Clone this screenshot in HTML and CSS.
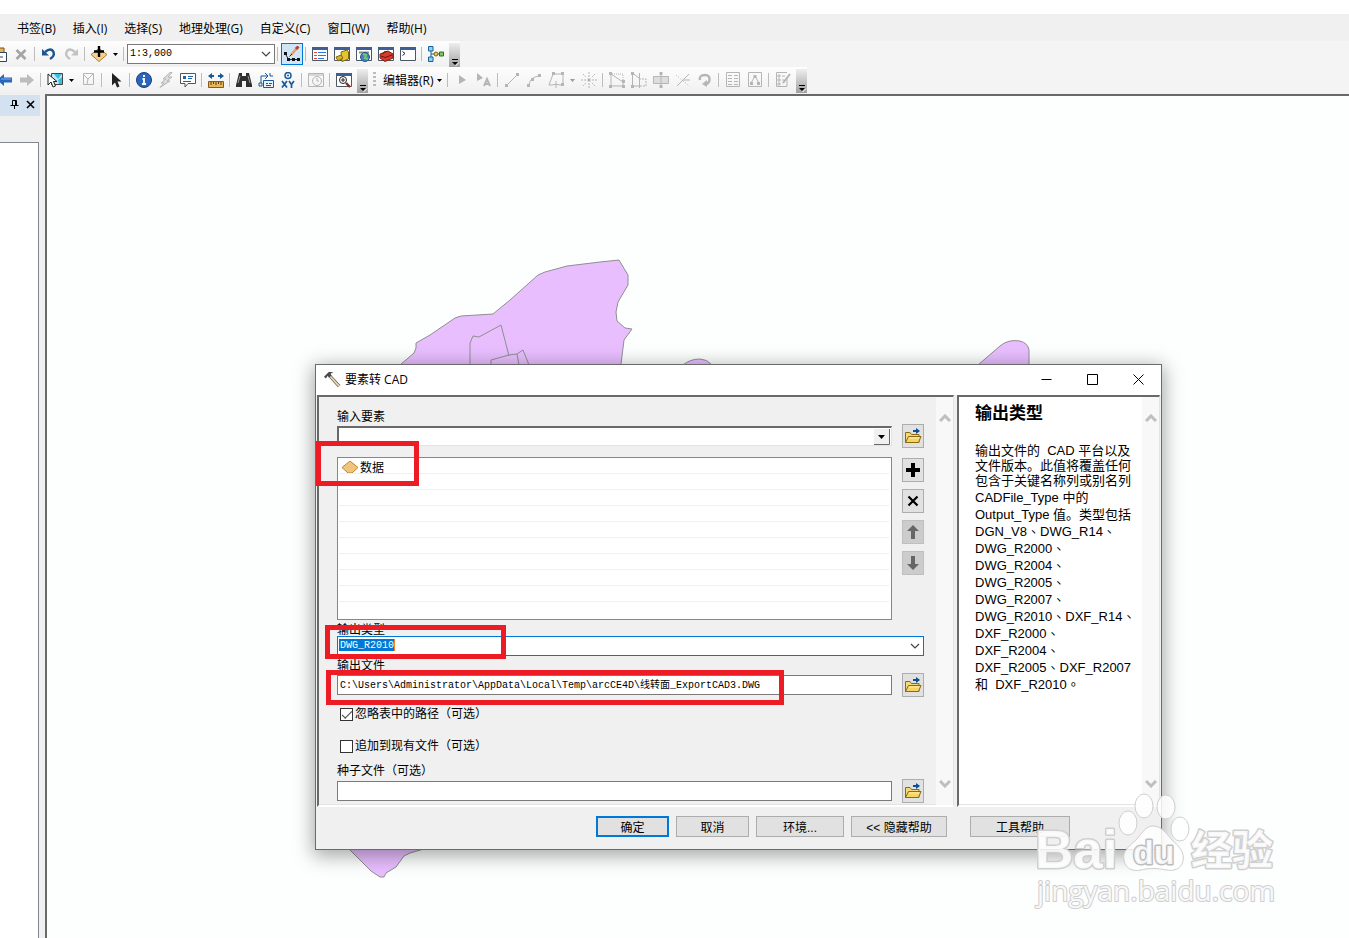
FILE: index.html
```html
<!DOCTYPE html>
<html lang="zh-CN">
    <head>
        <meta charset="UTF-8">
        <meta name="viewport" content="width=device-width, initial-scale=1.0">
        <title>要素转 CAD</title>

        <link rel="stylesheet" href="styles.css">
    </head>
    <body>

        <!-- shared icons -->
        <svg class="symbols">
            <symbol id="caret" viewBox="0 0 5 3"><path d="M0 0H5L2.5 3Z"/></symbol>
            <symbol id="folder" viewBox="0 0 18 18">
                <path d="M1.500 15.500V5.500H6L7.500 7.500H15V15.500Z" fill="#f3d77c" stroke="#8b6a14"/>
                <path d="M1.500 15.500L4.500 9.500H17L14.500 15.500Z" fill="#f5d365" stroke="#8b6a14"/>
                <path d="M5 11H15" stroke="#fff2b5"/>
                <path d="M9 4H14" stroke="#0a4f93" stroke-width="2"/><path d="M12 1L16 4L12 7Z" fill="#0a4f93"/>
            </symbol>
            <symbol id="more" viewBox="0 0 11 24">
                <path d="M3 16.500H9" stroke="#000"/><path d="M3 19H9L6 22Z" fill="#000"/>
                <path d="M6.500 23L10 19.500" stroke="#fff"/>
            </symbol>
            <symbol id="up" viewBox="0 0 12 8"><path d="M1 7L6 2L11 7" fill="none" stroke="#bfbfbf" stroke-width="3"/></symbol>
            <symbol id="down" viewBox="0 0 12 8"><path d="M1 1L6 6L11 1" fill="none" stroke="#bfbfbf" stroke-width="3"/></symbol>
            <symbol id="chevron" viewBox="0 0 10 6"><path d="M1 1L5 5L9 1" fill="none" stroke="#444" stroke-width="1.200"/></symbol>
            <symbol id="window" viewBox="0 0 16 16">
                <path d="M.500 1.500H15.500V14.500H.500Z" fill="#fff" stroke="#4d5663"/><path d="M0 1H16V4H0Z" fill="#3e5f95"/>
            </symbol>
        </svg>

        <nav class="menu">
            <button>书签(B)</button>
            <button>插入(I)</button>
            <button>选择(S)</button>
            <button>地理处理(G)</button>
            <button>自定义(C)</button>
            <button>窗口(W)</button>
            <button>帮助(H)</button>
        </nav>

        <div class="toolbar">
            <div class="strip strip-standard">
                <button class="tool" aria-label="粘贴"><svg viewBox="0 0 16 16"><path d="M3 2H13V9H3Z" fill="#e6b35a" stroke="#7a5518"/><path d="M8.500 6.500H15.500V15.500H8.500Z" fill="#fff" stroke="#345"/><path d="M5 11H12" stroke="#345"/></svg></button>
                <button class="tool" aria-label="删除"><svg viewBox="0 0 16 16"><path d="M3.500 4L12.500 13M12.500 4L3.500 13" stroke="#a5a5a5" stroke-width="2.600"/></svg></button>
                <i class="sep"></i>
                <button class="tool" aria-label="撤消"><svg viewBox="0 0 16 16"><path d="M4 6Q10 1 12.500 6Q14 10 9 13" fill="none" stroke="#1b5593" stroke-width="2.400"/><path d="M1 3V9.500H8Z" fill="#1b5593"/></svg></button>
                <button class="tool" aria-label="恢复"><svg viewBox="0 0 16 16"><path d="M12 6Q6 1 3.500 6Q2 10 7 13" fill="none" stroke="#c2c2c2" stroke-width="2.400"/><path d="M15 3V9.500H8Z" fill="#c2c2c2"/></svg></button>
                <i class="sep"></i>
                <button class="tool" aria-label="添加数据"><svg viewBox="0 0 16 16"><path d="M0 8.500L8 2.500L16 8.500L8 15.500Z" fill="#f6d08c" stroke="#a97b34"/><path d="M8 0V11M3 5.500H13" stroke="#000" stroke-width="2.400"/></svg></button>
                <button class="drop" aria-label="更多"><svg><use href="#caret"/></svg></button>
                <i class="sep"></i>
                <div class="combo scale">
                    <select aria-label="比例尺"><option>1:3,000</option></select>
                    <svg class="arrow"><use href="#chevron"/></svg>
                </div>
                <i class="sep"></i>
                <button class="tool pressed" aria-label="编辑器工具条"><svg viewBox="0 0 16 16"><path d="M1.500 8L4.500 13.500H15" fill="none" stroke="#222"/><path d="M0 6H3V9H0ZM3 12H6V15H3ZM8 12H11V15H8ZM13 12H16V15H13Z" fill="#111"/><path d="M7 9L13 2" stroke="#e0a45c" stroke-width="2.600"/><path d="M12 3L14.500 0.500" stroke="#c33b32" stroke-width="3"/><path d="M5.500 10.500L8 8" stroke="#333"/></svg></button>
                <i class="sep"></i>
                <button class="tool" aria-label="内容列表"><svg viewBox="0 0 16 16"><use href="#window"/><path d="M2 6.500H5M2 9.500H5M2 12.500H5" stroke="#e8483c"/><path d="M6 6.500H14M6 9.500H14M6 12.500H12" stroke="#2d78d8"/></svg></button>
                <button class="tool" aria-label="目录"><svg viewBox="0 0 16 16"><use href="#window"/><path d="M7 6L13 4L14.500 6V13L8 15.500Z" fill="#e5c52e" stroke="#7e6710"/><path d="M2 11L7 9L9 12L4 15Z" fill="#d4b527" stroke="#7e6710"/></svg></button>
                <button class="tool" aria-label="搜索"><svg viewBox="0 0 16 16"><use href="#window"/><path d="M3 6.500H13" stroke="#888" stroke-width="2"/><circle cx="9" cy="11" r="4.500" fill="#3c83c9" stroke="#27568a"/><path d="M7 8L10 9L9 12L12 13" stroke="#7cc46c" stroke-width="2" fill="none"/></svg></button>
                <button class="tool" aria-label="工具箱"><svg viewBox="0 0 16 16"><use href="#window"/><path d="M2 8L10 5L15 8V12L7 15.500L2 12Z" fill="#d63b2b" stroke="#7d1c14"/><path d="M5 8Q5 5 9 5.500M3 10L7 11.500L14 9" fill="none" stroke="#6b1510"/></svg></button>
                <button class="tool" aria-label="Python"><svg viewBox="0 0 16 16"><use href="#window"/><path d="M2.500 5.500L5 7.500L2.500 9.500" fill="none" stroke="#222"/></svg></button>
                <i class="sep"></i>
                <button class="tool" aria-label="模型构建器"><svg viewBox="0 0 16 16"><path d="M3 3V13M3 8H16" stroke="#14649c"/><path d="M.500 .500H5V5H.500ZM.500 11H5V15.500H.500Z" fill="#8fd0f0" stroke="#14649c"/><circle cx="8" cy="8" r="2" fill="#f1c64c" stroke="#7d6517"/><path d="M11.500 6H15.500V10H11.500Z" fill="#7fc65d" stroke="#326e22"/></svg></button>
                <button class="overflow" aria-label="工具条选项"><svg><use href="#more"/></svg></button>
            </div>
        </div>

        <div class="toolbar">
            <div class="strip strip-tools">
                <button class="tool" aria-label="后退"><svg viewBox="0 0 16 16"><path d="M0 8L7 2V5.500H15V10.500H7V14Z" fill="#2767bd"/><path d="M4 7H14" stroke="#7fb1ec"/></svg></button>
                <button class="tool" aria-label="前进"><svg viewBox="0 0 16 16"><path d="M15 8L8 2V5.500H1V10.500H8V14Z" fill="#bdbdbd"/></svg></button>
                <i class="sep"></i>
                <button class="tool" aria-label="选择要素"><svg viewBox="0 0 16 16"><path d="M4.500 1.500H15.500V12.500H4.500Z" fill="#c7e8f2" stroke="#444"/><path d="M7 2H15L11 7ZM11 8L15 5V12H12Z" fill="#35bfe0"/><path d="M1 2V13L4 10L6 15L8.500 14L6.500 9.500H10Z" fill="#fff" stroke="#222"/></svg></button>
                <button class="drop" aria-label="更多"><svg><use href="#caret"/></svg></button>
                <button class="tool muted" aria-label="清除所选要素"><svg viewBox="0 0 16 16"><path d="M3.500 1.500H13.500V12.500H3.500ZM4 3L8 7L13 2M8 7L7 12" /></svg></button>
                <i class="sep"></i>
                <button class="tool" aria-label="选择元素"><svg viewBox="0 0 16 16"><path d="M4 1V13.500L7 10.500L9 15.500L11.500 14.500L9.500 9.500H13.500Z" fill="#222"/></svg></button>
                <i class="sep"></i>
                <button class="tool" aria-label="识别"><svg viewBox="0 0 16 16"><circle cx="8" cy="8" r="7.500" fill="#2a66bd" stroke="#173f80"/><path d="M8 3V5M6.500 7H8V12M6 12H10" fill="none" stroke="#fff" stroke-width="1.800"/></svg></button>
                <button class="tool muted" aria-label="超链接"><svg viewBox="0 0 16 16"><path d="M12 .500L5 7H8L3 11H6L2 15.500L12 9H9L14 5H10L14 .500Z" fill="#ddd"/></svg></button>
                <button class="tool" aria-label="HTML 弹出窗口"><svg viewBox="0 0 16 16"><path d="M.500 1.500H15.500V11.500H8L5 15V11.500H.500Z" fill="#fff" stroke="#555"/><path d="M3 4H6V7H3Z" fill="#1b65b0"/><path d="M8 4.500H13M8 6.500H12M3 9.500H11" stroke="#1b65b0"/></svg></button>
                <i class="sep"></i>
                <button class="tool" aria-label="测量"><svg viewBox="0 0 16 16"><path d="M1 4H6M10 4H15" stroke="#17599a" stroke-width="2"/><path d="M0 4L4 1V7ZM16 4L12 1V7Z" fill="#17599a"/><path d="M.500 9.500H15.500V15.500H.500Z" fill="#e9b75a" stroke="#8a5718"/><path d="M3 10V13M5.500 10V12M8 10V13M10.500 10V12M13 10V13" stroke="#5b3909"/></svg></button>
                <i class="sep"></i>
                <button class="tool" aria-label="查找"><svg viewBox="0 0 16 16"><path d="M3 1H6V4H10V1H13L16 13V15H10V9H6V15H0V13Z" fill="#303030"/><path d="M2 11L4 4M12 4L14 11" stroke="#999"/></svg></button>
                <button class="tool" aria-label="查找路径"><svg viewBox="0 0 16 16"><path d="M3 11V4H9M7 1L10 4L7 7" fill="none" stroke="#17599a"/><path d="M5.500 8.500H15.500V15.500H5.500Z" fill="#e8f2f8" stroke="#17599a"/><path d="M12 1V4H15M8 11.500H10M11 11.500H14M8 13.500H13M1 11H4V14H1Z" fill="none" stroke="#17599a"/></svg></button>
                <button class="tool" aria-label="转到 XY"><svg viewBox="0 0 16 16"><circle cx="8" cy="3.500" r="3" fill="#fff" stroke="#17599a" stroke-width="1.500"/><circle cx="8" cy="3.500" r="1" fill="#17599a"/><path d="M2 9L7 15.500M7 9L2 15.500M9 9L11.500 12.500L14 9M11.500 12V16" fill="none" stroke="#17599a" stroke-width="1.700"/></svg></button>
                <i class="sep"></i>
                <button class="tool muted" aria-label="时间滑块"><svg viewBox="0 0 16 16"><path d="M.500 1.500H15.500V14.500H.500ZM1 3H15"/><circle cx="9" cy="9" r="4.500"/><path d="M9 6V9H11"/></svg></button>
                <i class="sep"></i>
                <button class="tool" aria-label="创建查看器窗口"><svg viewBox="0 0 16 16"><use href="#window"/><circle cx="7" cy="8" r="3.500" fill="#fff" stroke="#222"/><path d="M5 8H9M7 6V10" stroke="#222"/><path d="M10 11L14 15" stroke="#7d2b20" stroke-width="2.400"/></svg></button>
                <button class="overflow" aria-label="工具条选项"><svg><use href="#more"/></svg></button>
            </div>
            <div class="strip">
                <i class="grip"></i>
                <button class="editor">编辑器(R)</button>
                <button class="drop" aria-label="编辑器菜单"><svg><use href="#caret"/></svg></button>
                <i class="sep"></i>
                <button class="tool muted" aria-label="编辑工具"><svg viewBox="0 0 16 16"><path d="M5 3V12L12 8Z" fill="#b5b5b5" stroke="none"/></svg></button>
                <button class="tool muted" aria-label="编辑注记工具"><svg viewBox="0 0 16 16"><path d="M1 1V9L7 6Z" fill="#b5b5b5" stroke="none"/><path d="M8 14L11 7L14 14M9 12H13" stroke-width="2"/></svg></button>
                <i class="sep"></i>
                <button class="tool muted" aria-label="直线段"><svg viewBox="0 0 16 16"><path d="M3 13L13 3"/><path d="M1 12H4V15H1ZM12 1H15V4H12Z" fill="#b5b5b5" stroke="none"/></svg></button>
                <button class="tool muted" aria-label="弧段"><svg viewBox="0 0 16 16"><path d="M3 13Q4 5 13 4"/><path d="M1 12H4V15H1ZM12 2H15V5H12ZM5 6H8V9H5Z" fill="#b5b5b5" stroke="none"/></svg></button>
                <button class="tool muted" aria-label="追踪"><svg viewBox="0 0 16 16"><path d="M5 2H15V13H11M5 2L1 13H5M8 9V16M5 12.500H11"/><path d="M4 0H7V3H4ZM13 0H16V3H13ZM13 11H16V14H13Z" fill="#b5b5b5" stroke="none"/></svg></button>
                <button class="drop muted" aria-label="更多"><svg><use href="#caret"/></svg></button>
                <button class="tool muted" aria-label="点"><svg viewBox="0 0 16 16"><path d="M8 0V5M8 11V16M0 8H5M11 8H16M2 2L5 5M11 11L14 14M14 2L11 5M5 11L2 14" stroke-dasharray="2 1"/><path d="M6.500 6.500H9.500V9.500H6.500Z" fill="#b5b5b5" stroke="none"/></svg></button>
                <i class="sep"></i>
                <button class="tool muted" aria-label="编辑折点"><svg viewBox="0 0 16 16"><path d="M2 2V14H14V10L2 2"/><path d="M3 2H14V10" stroke-dasharray="1 1"/><path d="M0 0H3V3H0ZM0 13H3V16H0ZM13 13H16V16H13ZM13 8H16V11H13Z" fill="#b5b5b5" stroke="none"/></svg></button>
                <button class="tool muted" aria-label="整形要素"><svg viewBox="0 0 16 16"><path d="M1.500 1V14H8M1.500 1L8 6M8.500 1V16"/><path d="M8 7H15V14H8" stroke-dasharray="2 1"/><path d="M0 0H3V3H0ZM0 13H3V16H0Z" fill="#b5b5b5" stroke="none"/></svg></button>
                <button class="tool muted" aria-label="裁剪面"><svg viewBox="0 0 16 16"><path d="M.500 4.500H15.500V11.500H.500Z" fill="#ddd"/><path d="M8 1V15"/><path d="M6.500 0H9.500V3H6.500ZM6.500 13H9.500V16H6.500Z" fill="#b5b5b5" stroke="none"/></svg></button>
                <button class="tool muted" aria-label="分割"><svg viewBox="0 0 16 16"><path d="M2 14L14 2M8 8H15"/><path d="M1 3L14 14" stroke-dasharray="1 2"/></svg></button>
                <button class="tool muted" aria-label="旋转"><svg viewBox="0 0 16 16"><path d="M3 8Q2 3 8 3Q13 3 12.500 8Q12 12 8 12" stroke-width="2.400"/><path d="M10 8V15L5 12Z" fill="#b5b5b5" stroke="none"/></svg></button>
                <i class="sep"></i>
                <button class="tool muted" aria-label="属性"><svg viewBox="0 0 16 16"><path d="M1.500 .500H14.500V14.500H1.500ZM3 3.500H7M3 6.500H7M3 9.500H7M3 12.500H7M9 3.500H13M9 6.500H13M9 9.500H13M9 12.500H13"/></svg></button>
                <button class="tool muted" aria-label="草图属性"><svg viewBox="0 0 16 16"><path d="M1.500 .500H14.500V14.500H1.500ZM4 11L8 4L12 11"/><path d="M3 10H6V13H3ZM6.500 3H9.500V6H6.500ZM10 10H13V13H10Z" fill="#b5b5b5" stroke="none"/></svg></button>
                <i class="sep"></i>
                <button class="tool muted" aria-label="创建要素"><svg viewBox="0 0 16 16"><path d="M12 5V14.500H1.500V.500H12M3 3H5V5H3ZM3 7H5V9H3ZM3 11H5V13H3ZM7 4H10M7 8H9"/><path d="M8 11L15 2" stroke-width="2"/></svg></button>
                <button class="overflow" aria-label="工具条选项"><svg><use href="#more"/></svg></button>
            </div>
        </div>

        <div class="workspace">
            <aside class="contents">
                <div class="contents-title">
                    <button aria-label="固定"><svg viewBox="0 0 9 9"><path d="M2.500 5V.500H6.500V5M5.500 .500V5M.500 5.500H8.500M4.500 6V9" fill="none" stroke="#000"/></svg></button>
                    <button aria-label="关闭"><svg viewBox="0 0 9 9"><path d="M1 1L8 8M8 1L1 8" stroke="#000" stroke-width="1.600"/></svg></button>
                </div>
                <div class="contents-tree"></div>
            </aside>

            <main class="map">
                <svg class="features" viewBox="47 96 1302 842" preserveAspectRatio="xMinYMin slice">
                    <path d="M400 365L414 353L416 348V343L430 335L455 318L461 316L493 314L510 300L538 275L545 272L567 266L600 262L619 260L628 275V285L618 302L616 312L617 321L625 328L632 329L624 340L621 364L622 480H400Z"/>
                    <path class="line" d="M470 365V343L473 336L479 337L501 325L509 356M491 365V360L509 355L517 354L523 350L529 365M517 354L519 365"/>
                    <path d="M683 365Q690 359 700 359Q707 359 712 365Z"/>
                    <path d="M978 365L1000 346Q1008 339 1020 341Q1028 343 1029 350V365Z"/>
                    <path d="M348 848L371 871L380 877H384L386 873L396 867L404 856L410 853L427 848Z"/>
                </svg>
            </main>
        </div>

        <!-- geoprocessing tool window -->
        <section class="dialog">
            <header class="titlebar">
                <svg class="hammer" viewBox="0 0 18 18"><path d="M6 5L16 16" stroke="#73604c" stroke-width="3.400"/><path d="M6 5L16 16" stroke="#e5d8c0" stroke-width="1.800"/><path d="M0 6L5 1L10 1L7 3L8 5L5 7L4 5L2 8Z" fill="#4a4a4a"/></svg>
                <h2>要素转 CAD</h2>
                <button aria-label="最小化"><svg viewBox="0 0 11 11"><path d="M.500 5.500H10.500"/></svg></button>
                <button aria-label="最大化"><svg viewBox="0 0 11 11"><path d="M.500 .500H10.500V10.500H.500Z"/></svg></button>
                <button aria-label="关闭窗口"><svg viewBox="0 0 11 11"><path d="M.500 .500L10.500 10.500M10.500 .500L.500 10.500"/></svg></button>
            </header>

            <div class="panels">
                <div class="panel form-panel">
                    <form class="form" id="export">
                        <label class="first" for="features">输入要素</label>
                        <div class="row">
                            <div class="combo sunken">
                                <select id="features"><option></option></select>
                                <svg class="arrow classic" viewBox="0 0 16 16"><path d="M0 0H16V16H0Z" fill="#f0f0f0"/><path d="M0 15.500H15.500V0" fill="none" stroke="#696969"/><path d="M4 6H11L7.500 10Z"/></svg>
                            </div>
                            <button type="button" class="side" aria-label="浏览输入要素"><svg><use href="#folder"/></svg></button>
                        </div>

                        <div class="row list-row">
                            <ul class="list">
                                <li><svg viewBox="0 0 16 12"><path d="M0 6.500L8 0L16 6.500L10 12H6Z" fill="#f0c47c" stroke="#b98532"/></svg>数据</li>
                                <li></li><li></li><li></li><li></li><li></li><li></li><li></li><li></li><li></li>
                            </ul>
                            <div class="side-buttons">
                                <button type="button" class="side" aria-label="添加"><svg viewBox="0 0 18 18"><path d="M9 2V16M2 9H16" stroke="#000" stroke-width="4"/></svg></button>
                                <button type="button" class="side" aria-label="移除"><svg viewBox="0 0 18 18"><path d="M4.500 4.500L13.500 13.500M13.500 4.500L4.500 13.500" stroke="#000" stroke-width="2.200"/></svg></button>
                                <button type="button" class="side" aria-label="上移" disabled><svg viewBox="0 0 18 18"><path d="M9 2L15 8H11V16H7V8H3Z" fill="#666"/></svg></button>
                                <button type="button" class="side" aria-label="下移" disabled><svg viewBox="0 0 18 18"><path d="M9 16L15 10H11V2H7V10H3Z" fill="#666"/></svg></button>
                            </div>
                        </div>

                        <label class="tight" for="type">输出类型</label>
                        <div class="combo focused">
                            <select id="type"><option>DWG_R2010</option></select>
                            <svg class="arrow"><use href="#chevron"/></svg>
                        </div>

                        <label for="output">输出文件</label>
                        <div class="row">
                            <input type="text" id="output" value="C:\Users\Administrator\AppData\Local\Temp\arcCE4D\线转面_ExportCAD3.DWG">
                            <button type="button" class="side" aria-label="浏览输出文件"><svg><use href="#folder"/></svg></button>
                        </div>

                        <label class="check"><input type="checkbox" checked>忽略表中的路径（可选）</label>
                        <label class="check"><input type="checkbox">追加到现有文件（可选）</label>

                        <label class="last" for="seed">种子文件（可选）</label>
                        <div class="row">
                            <input type="text" id="seed">
                            <button type="button" class="side" aria-label="浏览种子文件"><svg><use href="#folder"/></svg></button>
                        </div>
                    </form>
                    <div class="scroll"><svg><use href="#up"/></svg><svg><use href="#down"/></svg></div>
                </div>

                <div class="panel help-panel">
                    <article class="help">
                        <h1>输出类型</h1>
                        <p class="intro">输出文件的&nbsp; CAD 平台以及<br>文件版本。此值将覆盖任何<br>包含于关键名称列或别名列</p>
                        <p>CADFile_Type 中的<br>Output_Type 值。类型包括<br>DGN_V8、DWG_R14、<br>DWG_R2000、<br>DWG_R2004、<br>DWG_R2005、<br>DWG_R2007、<br>DWG_R2010、DXF_R14、<br>DXF_R2000、<br>DXF_R2004、<br>DXF_R2005、DXF_R2007<br>和&nbsp; DXF_R2010。</p>
                    </article>
                    <div class="scroll"><svg><use href="#up"/></svg><svg><use href="#down"/></svg></div>
                </div>
            </div>

            <footer class="actions">
                <button class="default">确定</button>
                <button>取消</button>
                <button class="wide">环境...</button>
                <button class="wider">&lt;&lt; 隐藏帮助</button>
                <button class="tool-help">工具帮助</button>
            </footer>
        </section>

        <div class="mark mark-data"></div>
        <div class="mark mark-type"></div>
        <div class="mark mark-output"></div>

        <svg class="watermark" viewBox="0 0 260 130">
            <ellipse cx="98" cy="33" rx="9" ry="12"/>
            <ellipse cx="114" cy="16" rx="9" ry="12"/>
            <ellipse cx="136" cy="17" rx="9" ry="12"/>
            <ellipse cx="150" cy="39" rx="9" ry="12"/>
            <path d="M123 36C131 36 136 43 142 50C149 56 155 63 153 71C151 80 143 81 136 80C128 78 118 78 111 80C102 82 95 78 94 70C92 62 99 56 105 51C111 45 115 36 123 36Z"/>
            <text class="latin" x="5" y="78">Bai</text>
            <text class="du" x="103" y="74">du</text>
            <text class="han" x="161" y="75">经验</text>
            <text class="url" x="7" y="111">jingyan.baidu.com</text>
        </svg>

    </body>
</html>
```
FILE: styles.css
```css
*{
    box-sizing: border-box;
}
body{
    margin: 0;
    padding-top: 14px;
    height: 100vh;
    overflow: hidden;
    display: flex;
    flex-direction: column;
    position: relative;
    background-color: #fff;
    color: #000;
    font-family: "Open Sans", "Noto Sans CJK SC", sans-serif;
    font-size: 12px;
}
button{
    font: inherit;
    color: inherit;
    padding: 0;
    border: 0;
    background: none;
    white-space: nowrap;
}
svg{
    display: block;
    flex: none;
}
.symbols{
    position: absolute;
    width: 0;
    height: 0;
}

/* menu and toolbars */
.menu{
    display: flex;
    gap: 17px;
    height: 27px;
    flex: none;
    padding-left: 17px;
    background-color: #f0f0f0;
}
.toolbar{
    display: flex;
    height: 26px;
    flex: none;
    background-color: #f4f4f4;
}
.strip{
    display: flex;
    align-items: center;
    background: linear-gradient(#fdfdfd, #f0f0f0);
}
.strip-standard{
    margin-left: -12px;
}
.strip-tools{
    margin-left: -6px;
}
.tool{
    display: flex;
    align-items: center;
    justify-content: center;
    width: 22px;
    height: 22px;
    flex: none;
}
.tool svg{
    width: 16px;
    height: 16px;
}
.pressed{
    border: 1px solid #0078d7;
    background-color: #cfe5f7;
}
.muted{
    fill: #999;
}
.tool.muted svg{
    fill: none;
    stroke: #b5b5b5;
}
.drop{
    display: flex;
    justify-content: center;
    width: 11px;
}
.drop svg{
    width: 5px;
    height: 3px;
}
.sep{
    width: 6px;
    height: 14px;
    flex: none;
    background: linear-gradient(#bdbdbd, #bdbdbd) 2px 0 / 1px 100% no-repeat;
}
.overflow{
    align-self: flex-end;
    width: 11px;
    height: 24px;
    margin-left: 2px;
    background: linear-gradient(#eee, #a0a0a0);
}
.overflow svg{
    width: 11px;
    height: 24px;
}
.grip{
    width: 3px;
    height: 16px;
    margin: 0 7px 0 5px;
    background: repeating-linear-gradient(#bbb 0 2px, transparent 2px 4px);
}

/* combo boxes */
.combo{
    display: flex;
    align-items: center;
    height: 20px;
    flex: 1;
    border: 1px solid #7a7a7a;
    background-color: #fff;
    padding-right: 3px;
}
.combo select, .row input{
    appearance: none;
    flex: 1;
    min-width: 0;
    height: 18px;
    border: 0;
    border-radius: 0;
    padding: 0 2px 2px;
    background-color: transparent;
    color: #000;
    font-family: "Liberation Mono", "Noto Sans CJK SC", monospace;
    font-size: 10px;
}
.arrow{
    width: 10px;
    height: 6px;
}
.scale{
    flex: none;
    width: 148px;
}

/* workspace */
.workspace{
    display: flex;
    flex: 1;
    min-height: 0;
    background-color: #f0f0f0;
}
.contents{
    display: flex;
    flex-direction: column;
    width: 40px;
    margin: 2px 5px 0 0;
}
.contents-title{
    display: flex;
    align-items: center;
    justify-content: flex-end;
    gap: 7px;
    height: 21px;
    padding: 0 5px 2px 0;
    background-color: #d4e1f0;
}
.contents-title svg{
    width: 9px;
    height: 9px;
}
.contents-tree{
    flex: 1;
    margin: 26px 1px 0 0;
    border: 1px solid #828790;
    border-width: 1px 1px 0 0;
    background-color: #fff;
}
.map{
    flex: 1;
    margin-top: 1px;
    border-top: 2px solid #696969;
    border-left: 2px solid #696969;
    background-color: #fdfefe;
}
.features{
    width: 100%;
    height: 100%;
}
.features path{
    fill: #e8beff;
    stroke: #8f8f8f;
}
.features .line{
    fill: none;
}

/* tool window */
.dialog{
    position: absolute;
    left: 315px;
    top: 364px;
    width: 847px;
    display: flex;
    flex-direction: column;
    border: 1px solid #6b6b6b;
    background-color: #f0f0f0;
    box-shadow: 0 4px 18px 2px rgba(0, 0, 0, 0.35);
    font-family: "Liberation Sans", "Noto Sans CJK SC", sans-serif;
}
.titlebar{
    display: flex;
    align-items: center;
    height: 30px;
    padding: 0 0 2px 8px;
    background-color: #fff;
    font-family: "Open Sans", "Noto Sans CJK SC", sans-serif;
}
.titlebar h2{
    flex: 1;
    margin: 0 0 0 4px;
    font-size: 12px;
    font-weight: normal;
}
.titlebar button{
    display: flex;
    justify-content: center;
    width: 46px;
}
.titlebar button svg{
    width: 11px;
    height: 11px;
    fill: none;
    stroke: #000;
}
.hammer{
    width: 17px;
    height: 17px;
}
.panels{
    display: flex;
    gap: 3px;
    padding: 0 1px;
}
.panel{
    display: flex;
    border: 2px solid #696969;
    border-right: 1px solid #e3e3e3;
    border-bottom: 2px solid #fff;
    box-shadow: inset 0 -1px #e3e3e3;
}
.form-panel{
    flex: 1;
}
.help-panel{
    width: 203px;
    background-color: #fff;
}
.scroll{
    display: flex;
    flex-direction: column;
    align-items: center;
    justify-content: space-between;
    width: 17px;
    padding: 17px 0 17px;
    background-color: #f8f8f8;
}
.scroll svg{
    width: 12px;
    height: 8px;
}
.form{
    display: flex;
    flex-direction: column;
    flex: 1;
    padding: 12px 12px 2px 18px;
}
.form label{
    height: 17px;
    line-height: 20px;
    flex: none;
}
.form .first{
    height: 15px;
    line-height: 17px;
}
.form .tight{
    height: 16px;
}
.form .last{
    height: 18px;
}
.form .check{
    display: flex;
    align-items: center;
    gap: 2px;
    height: 32px;
    padding: 2px 0 0 3px;
}
.check input{
    appearance: none;
    width: 13px;
    height: 13px;
    margin: 0;
    border: 1px solid #333;
    background-color: #fff;
}
.check input:checked::after{
    content: "";
    display: block;
    width: 9px;
    height: 4px;
    margin: 2px 0 0 1px;
    border: solid #444;
    border-width: 0 0 1px 1px;
    transform: rotate(-45deg);
}
.row{
    display: flex;
    align-items: center;
    gap: 10px;
}
.row input{
    height: 20px;
    border: 1px solid #7a7a7a;
    padding-bottom: 3px;
    background-color: #fff;
}
.sunken{
    border: 2px solid #696969;
    border-right: 1px solid #e3e3e3;
    border-bottom: 1px solid #e3e3e3;
    padding-right: 1px;
}
.classic{
    width: 16px;
    height: 16px;
}
.focused{
    flex: none;
    position: relative;
    border-color: #0078d7;
}
.focused select{
    color: #fff;
    background: linear-gradient(90deg, #0078d7 55px, #f58220 55px) 1px 2px / 56px 12px no-repeat;
}
.focused option{
    color: #000;
}
.side{
    display: flex;
    align-items: center;
    justify-content: center;
    width: 22px;
    height: 24px;
    border: 1px solid #adadad;
    background-color: #e1e1e1;
}
.side svg{
    width: 18px;
    height: 18px;
}
.side:disabled{
    border-color: #bfbfbf;
    background-color: #ccc;
}
.list-row{
    align-items: flex-start;
    margin-top: 9px;
}
.list{
    flex: 1;
    margin: 0;
    padding: 0 2px 1px 1px;
    border: 1px solid #828790;
    background-color: #fff;
    list-style: none;
}
.list li{
    display: flex;
    align-items: center;
    gap: 2px;
    height: 16px;
    padding: 2px 0 0 3px;
    border-bottom: 1px solid #f0f0f0;
}
.list li:last-child{
    border-bottom: 0;
}
.list svg{
    width: 16px;
    height: 12px;
}
.side-buttons{
    display: flex;
    flex-direction: column;
    gap: 7px;
    padding-top: 1px;
}
.help{
    flex: 1;
    padding: 7px 0 0 16px;
    font-family: "Liberation Sans", "Noto Sans CJK TC", sans-serif;
    font-size: 13px;
    white-space: nowrap;
}
.help h1{
    margin: 0 0 19px;
    font-size: 17px;
    line-height: 20px;
}
.help p{
    margin: 0;
    line-height: 17px;
}
.help .intro{
    margin-bottom: 1px;
    line-height: 15px;
}
.actions{
    display: flex;
    justify-content: flex-end;
    gap: 7px;
    padding: 9px 91px 12px 0;
}
.actions button{
    width: 73px;
    height: 21px;
    border: 1px solid #adadad;
    background-color: #e1e1e1;
}
.actions .default{
    border: 2px solid #0078d7;
}
.actions .wide{
    width: 88px;
}
.actions .wider{
    width: 96px;
}
.actions .tool-help{
    width: 100px;
    margin-left: 16px;
}

/* red highlight boxes */
.mark{
    position: absolute;
    border: 5px solid #ed1c24;
    pointer-events: none;
}
.mark-data{
    left: 316px;
    top: 441px;
    width: 103px;
    height: 45px;
}
.mark-type{
    left: 325px;
    top: 625px;
    width: 181px;
    height: 34px;
}
.mark-output{
    left: 326px;
    top: 670px;
    width: 458px;
    height: 35px;
}

.watermark{
    position: absolute;
    left: 1030px;
    top: 790px;
    width: 260px;
    height: 130px;
    fill: #fff;
    fill-opacity: 0.85;
    stroke: #cfcfcf;
    pointer-events: none;
}
.watermark text{
    font-weight: bold;
    paint-order: stroke;
    stroke-width: 3px;
    stroke-linejoin: round;
}
.watermark .latin{
    font-family: "Liberation Sans", sans-serif;
    font-size: 53px;
}
.watermark .du{
    font-family: "Liberation Sans", sans-serif;
    font-size: 34px;
    stroke: #bdbdbd;
}
.watermark .han{
    font-family: "Noto Sans CJK SC", sans-serif;
    font-size: 41px;
}
.watermark .url{
    font-family: "Open Sans", sans-serif;
    font-size: 28px;
    font-weight: normal;
    stroke-width: 2px;
}
```
